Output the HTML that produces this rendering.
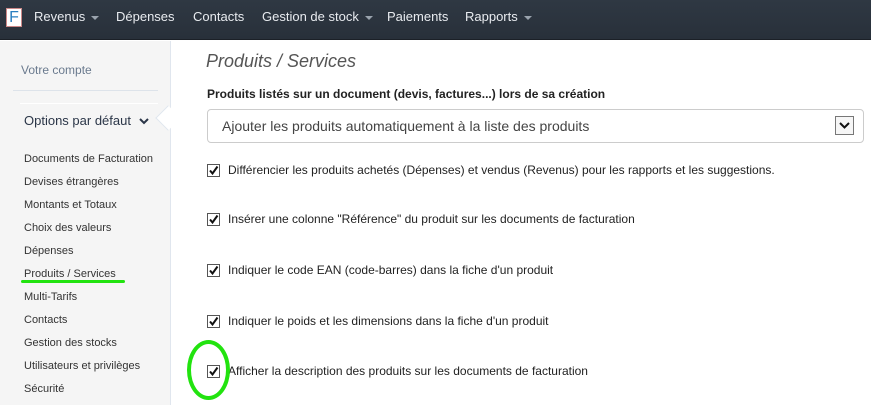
<!DOCTYPE html>
<html><head><meta charset="utf-8"><style>
*{margin:0;padding:0;box-sizing:border-box}
body{width:871px;height:405px;overflow:hidden;background:#fff;font-family:"Liberation Sans",Arial,sans-serif;position:relative}
.nav{position:absolute;left:0;top:0;width:871px;height:40px;background:linear-gradient(#2f3843,#28303a);border-bottom:1px solid #1b2027}
.nav span{position:absolute;top:9px;color:#e8ebef;font-size:13px}
.car{display:inline-block;width:0;height:0;border-left:4px solid transparent;border-right:4px solid transparent;border-top:4px solid #9aa3ad;margin-left:6px;vertical-align:middle}
.logo{position:absolute;left:6px;top:8px;width:16px;height:19px;background:#fff;border:1px solid #c88;color:#2a7fc0;font-size:16px;line-height:18px;text-align:center}
.side{position:absolute;left:0;top:41px;width:171px;height:364px;background:#f5f5f5;border-right:1px solid #e0e6ee}
.s{position:absolute;left:24px;font-size:11px;color:#333}
.cb{position:absolute;left:207px;width:13px;height:13px;border:1px solid #555;background:#fff}
.cb svg{position:absolute;left:0;top:0}
.t{position:absolute;left:228px;font-size:12px;color:#222}
</style></head><body>
<div class="nav">
<div class="logo">F</div>
<span style="left:34px">Revenus<i class="car"></i></span>
<span style="left:116px">Dépenses</span>
<span style="left:193px">Contacts</span>
<span style="left:262px">Gestion de stock<i class="car"></i></span>
<span style="left:387px">Paiements</span>
<span style="left:465px">Rapports<i class="car"></i></span>
</div>
<div class="side">
<div style="position:absolute;left:21px;top:22px;font-size:12px;color:#6a7a8e">Votre compte</div>
<div style="position:absolute;left:13px;top:49px;width:145px;height:1px;background:#dde3ea"></div>
<div style="position:absolute;left:20px;top:62px;width:138px;height:1px;background:#fff"></div>
<div style="position:absolute;left:24px;top:72px;font-size:13px;color:#2b3648">Options par défaut <svg width="10" height="8" style="margin-left:4px"><path d="M1 2 L5 6 L9 2" stroke="#2b3648" stroke-width="2" fill="none"/></svg></div>
<div style="position:absolute;left:159px;top:68px;width:18px;height:18px;background:#fff;border-left:1px solid #e0e6ee;border-bottom:1px solid #e0e6ee;transform:rotate(45deg)"></div>
</div>
<div class="s" style="top:153px">Documents de Facturation</div>
<div class="s" style="top:176px">Devises étrangères</div>
<div class="s" style="top:199px">Montants et Totaux</div>
<div class="s" style="top:222px">Choix des valeurs</div>
<div class="s" style="top:245px">Dépenses</div>
<div class="s" style="top:268px">Produits / Services</div>
<div class="s" style="top:291px">Multi-Tarifs</div>
<div class="s" style="top:314px">Contacts</div>
<div class="s" style="top:337px">Gestion des stocks</div>
<div class="s" style="top:360px">Utilisateurs et privilèges</div>
<div class="s" style="top:383px">Sécurité</div>
<div style="position:absolute;left:21px;top:280px;width:104px;height:3px;border-radius:2px;background:#22e30f"></div>

<div style="position:absolute;left:206px;top:51px;font-size:18px;font-style:italic;color:#555">Produits / Services</div>
<div style="position:absolute;left:207px;top:87px;font-size:12px;font-weight:bold;color:#222">Produits listés sur un document (devis, factures...) lors de sa création</div>
<div style="position:absolute;left:207px;top:109px;width:657px;height:34px;border:1px solid #ccc;border-radius:4px"><span style="position:absolute;left:14px;top:8px;font-size:14px;color:#444">Ajouter les produits automatiquement à la liste des produits</span>
<div style="position:absolute;left:627px;top:6px;width:19px;height:19px;border:1px solid #777;background:#f6f6f6"><svg width="17" height="17"><path d="M4 6 L8.5 10.5 L13 6" stroke="#111" stroke-width="2" fill="none"/></svg></div></div>

<div class="cb" style="top:164px"><svg width="11" height="11"><path d="M2 5.5 L4.5 8.5 L9.5 1.5" stroke="#111" stroke-width="2" fill="none"/></svg></div>
<div class="t" style="top:163px">Différencier les produits achetés (Dépenses) et vendus (Revenus) pour les rapports et les suggestions.</div>
<div class="cb" style="top:213px"><svg width="11" height="11"><path d="M2 5.5 L4.5 8.5 L9.5 1.5" stroke="#111" stroke-width="2" fill="none"/></svg></div>
<div class="t" style="top:212px">Insérer une colonne "Référence" du produit sur les documents de facturation</div>
<div class="cb" style="top:264px"><svg width="11" height="11"><path d="M2 5.5 L4.5 8.5 L9.5 1.5" stroke="#111" stroke-width="2" fill="none"/></svg></div>
<div class="t" style="top:263px">Indiquer le code EAN (code-barres) dans la fiche d'un produit</div>
<div class="cb" style="top:315px"><svg width="11" height="11"><path d="M2 5.5 L4.5 8.5 L9.5 1.5" stroke="#111" stroke-width="2" fill="none"/></svg></div>
<div class="t" style="top:314px">Indiquer le poids et les dimensions dans la fiche d'un produit</div>
<div class="cb" style="top:365px"><svg width="11" height="11"><path d="M2 5.5 L4.5 8.5 L9.5 1.5" stroke="#111" stroke-width="2" fill="none"/></svg></div>
<div class="t" style="top:364px">Afficher la description des produits sur les documents de facturation</div>
<div style="position:absolute;left:187px;top:340px;width:43px;height:60px;border:4px solid #22e30f;border-radius:50%"></div>
</body></html>
